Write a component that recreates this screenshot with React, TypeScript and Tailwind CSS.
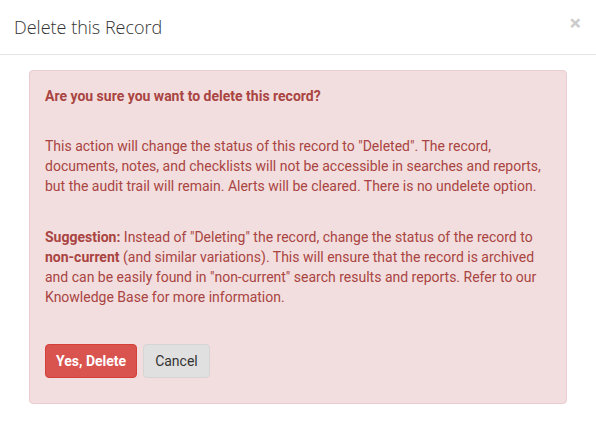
export default function App() {
  return (
    <div className="h-[438px] w-[596px] bg-white font-['Roboto',sans-serif]">
      <div className="flex h-[55px] items-center justify-between border-b border-[#e5e5e5] pl-[14px] pr-[15px]">
        <h4 className="font-['Open_Sans',sans-serif] text-[18px] font-light text-[#333]">
          Delete this Record
        </h4>
        <button className="-mt-[8px] text-[21px] font-bold leading-none text-[#ccc]">
          ×
        </button>
      </div>
      <div className="px-[29px] pt-[15px]">
        <div className="h-[334px] rounded-[4px] border border-[#ebccd1] bg-[#f2dede] px-[15px] pt-[15px] text-[14px] leading-[20px] text-[#a94442]">
          <p className="font-bold">Are you sure you want to delete this record?</p>
          <p className="mt-[30px]">
            This action will change the status of this record to "Deleted". The record,
            documents, notes, and checklists will not be accessible in searches and reports,
            but the audit trail will remain. Alerts will be cleared. There is no undelete option.
          </p>
          <p className="mt-[31px]">
            <strong>Suggestion:</strong> Instead of "Deleting" the record, change the status of the record to{' '}
            <strong>non-current</strong> (and similar variations). This will ensure that the record is archived
            and can be easily found in "non-current" search results and reports. Refer to our
            Knowledge Base for more information.
          </p>
          <div className="mt-[37px] flex gap-[6px]">
            <button className="h-[34px] rounded-[4px] border border-[#d43f3a] bg-[#d9534f] px-[10px] text-[14px] font-bold text-white">
              Yes, Delete
            </button>
            <button className="h-[34px] rounded-[4px] border border-[#d5d5d5] bg-[#e0e0e0] px-[11px] text-[14px] text-[#333]">
              Cancel
            </button>
          </div>
        </div>
      </div>
    </div>
  )
}
